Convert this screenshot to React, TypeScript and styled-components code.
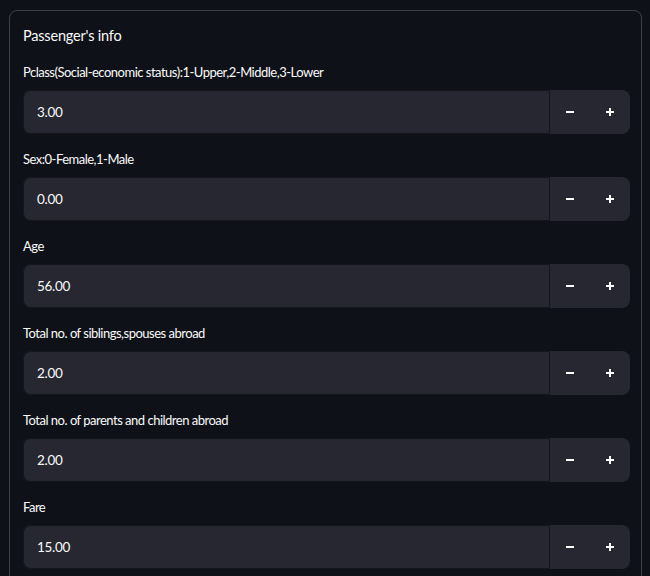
import React from "react";
import styled, { createGlobalStyle } from "styled-components";

const Global = createGlobalStyle`
  html, body { margin: 0; padding: 0; background: #0e1117; }
  body { font-family: "Lato", "Noto Sans", sans-serif; color: #fafafa; overflow: hidden; }
`;

const Page = styled.div`
  padding: 10px 8px 0 9px;
  height: 576px;
  box-sizing: border-box;
`;

const Form = styled.div`
  border: 1px solid rgba(250, 250, 250, 0.2);
  border-radius: 8px;
  padding: 13px 11px 40px 13px;
  display: flex;
  flex-direction: column;
  gap: 15px;
`;

const Title = styled.div`
  font-size: 14.5px;
  letter-spacing: -0.2px;
  line-height: 24px;
  color: #fafafa;
  margin-bottom: -1px;
`;

const Field = styled.div`
  display: flex;
  flex-direction: column;
  gap: 8px;
`;

const Label = styled.label`
  font-size: 13px;
  letter-spacing: -0.5px;
  line-height: 20px;
  color: #fafafa;
`;

const Control = styled.div`
  display: flex;
  height: 44px;
  background: #262730;
  border-radius: 8px;
`;

const Input = styled.div`
  flex: 1;
  box-sizing: border-box;
  border: 1px solid #15161c;
  border-radius: 8px 0 0 8px;
  display: flex;
  align-items: center;
  padding-left: 13px;
  font-size: 13.5px;
  letter-spacing: -0.3px;
  color: #fafafa;
`;

const Step = styled.button`
  width: 40px;
  border: none;
  background: transparent;
  display: flex;
  align-items: center;
  justify-content: center;
  padding: 0;
  color: #fafafa;
`;

const Minus = () => (
  <svg width="10" height="10" viewBox="0 0 10 10">
    <rect x="1" y="4" width="8" height="2" fill="#fafafa" />
  </svg>
);
const Plus = () => (
  <svg width="10" height="10" viewBox="0 0 10 10">
    <rect x="1" y="4" width="8" height="2" fill="#fafafa" />
    <rect x="4" y="1" width="2" height="8" fill="#fafafa" />
  </svg>
);

const fields = [
  ["Pclass(Social-economic status):1-Upper,2-Middle,3-Lower", "3.00"],
  ["Sex:0-Female,1-Male", "0.00"],
  ["Age", "56.00"],
  ["Total no. of siblings,spouses abroad", "2.00"],
  ["Total no. of parents and children abroad", "2.00"],
  ["Fare", "15.00"],
];

export default function App() {
  return (
    <>
      <Global />
      <Page>
        <Form>
          <Title>Passenger's info</Title>
          {fields.map(([label, value]) => (
            <Field key={label}>
              <Label>{label}</Label>
              <Control>
                <Input>{value}</Input>
                <Step><Minus /></Step>
                <Step><Plus /></Step>
              </Control>
            </Field>
          ))}
        </Form>
      </Page>
    </>
  );
}
